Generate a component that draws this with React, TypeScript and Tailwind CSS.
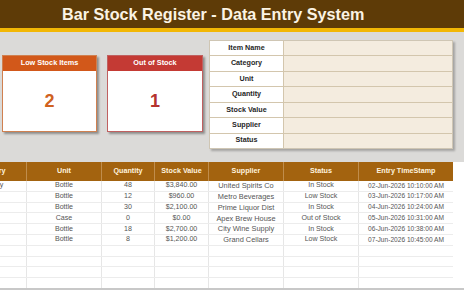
import React from 'react';

const formLabels = ['Item Name', 'Category', 'Unit', 'Quantity', 'Stock Value', 'Supplier', 'Status'];

const rows = [
    ['Whiskey', 'Bottle', '48', '$3,840.00', 'United Spirits Co', 'In Stock', '02-Jun-2026 10:10:00 AM'],
    ['Beer', 'Bottle', '12', '$960.00', 'Metro Beverages', 'Low Stock', '03-Jun-2026 10:17:00 AM'],
    ['Rum', 'Bottle', '30', '$2,100.00', 'Prime Liquor Dist', 'In Stock', '04-Jun-2026 10:24:00 AM'],
    ['Beer', 'Case', '0', '$0.00', 'Apex Brew House', 'Out of Stock', '05-Jun-2026 10:31:00 AM'],
    ['Wine', 'Bottle', '18', '$2,700.00', 'City Wine Supply', 'In Stock', '06-Jun-2026 10:38:00 AM'],
    ['Wine', 'Bottle', '8', '$1,200.00', 'Grand Cellars', 'Low Stock', '07-Jun-2026 10:45:00 AM'],
    ['', '', '', '', '', '', ''],
    ['', '', '', '', '', '', ''],
    ['', '', '', '', '', '', ''],
    ['', '', '', '', '', '', ''],
];

const headers = ['Category', 'Unit', 'Quantity', 'Stock Value', 'Supplier', 'Status', 'Entry TimeStamp'];
const widths = ['w-[73px]', 'w-[75px]', 'w-[53px]', 'w-[54px]', 'w-[75px]', 'w-[75px]', 'w-[94px]'];

function StatCard({ title, value, head, text, border }: { title: string; value: string; head: string; text: string; border: string }) {
    return (
        <div className={`flex flex-col bg-white border ${border} shadow-[2px_2px_2px_rgba(0,0,0,0.35)]`}>
            <div className={`h-[15px] ${head} flex items-center justify-center text-white font-bold text-[7.3px]`}>
                {title}
            </div>
            <div className={`flex-1 flex items-center justify-center font-bold text-[18px] ${text}`}>
                {value}
            </div>
        </div>
    );
}

export default function App() {
    return (
        <div className="w-[464px] h-[290px] overflow-hidden bg-white flex flex-col" style={{ fontFamily: '"Liberation Sans", Arial, sans-serif' }}>
            {/* Title band */}
            <div className="h-[28px] shrink-0 bg-[#5e3b07] flex items-center pl-[62px]">
                <span className="text-[#fbf3e4] font-bold text-[16.2px] leading-none">Bar Stock Register - Data Entry System</span>
            </div>
            <div className="h-[4px] shrink-0 bg-[#f2b705]" />

            {/* Cards + form */}
            <div className="h-[130px] shrink-0 bg-[#dbdad8] flex">
                <div className="flex gap-[10px] pl-[2px] pt-[23px]">
                    <div className="w-[95px] h-[77px] grid">
                        <StatCard title="Low Stock Items" value="2" head="bg-[#d2581a]" text="text-[#d0621f]" border="border-[#d08050]" />
                    </div>
                    <div className="w-[96px] h-[77px] grid">
                        <StatCard title="Out of Stock" value="1" head="bg-[#c43a34]" text="text-[#b5332f]" border="border-[#c06060]" />
                    </div>
                </div>
                <div className="ml-[6px] mt-[8px] w-[244px] h-[109px] border border-[#cfc6b4] shadow-[2px_2px_2px_rgba(0,0,0,0.25)] flex flex-col">
                    {formLabels.map((l, i) => (
                        <div key={l} className={`flex-1 flex ${i > 0 ? 'border-t border-[#d3c6ad]' : ''}`}>
                            <div className="w-[74px] bg-white border-r border-[#d3c6ad] flex items-center justify-center font-bold text-[7.2px] text-[#262626]">
                                {l}
                            </div>
                            <div className="flex-1 bg-[#f4ecdf]" />
                        </div>
                    ))}
                </div>
            </div>

            {/* Table */}
            <div className="flex-1 overflow-hidden relative">
                <div className="ml-[-46px] w-[499px]">
                    <div className="flex h-[19px] bg-[#a3630f]">
                        {headers.map((h, i) => (
                            <div key={h} className={`${widths[i]} shrink-0 flex items-center justify-center whitespace-nowrap text-[#fff3df] font-bold text-[7.2px] ${i < headers.length - 1 ? 'border-r border-[#c08d4c]' : ''}`}>
                                {h}
                            </div>
                        ))}
                    </div>
                    {rows.map((r, ri) => (
                        <div key={ri} className="flex h-[10.8px] border-b border-[#ececec]">
                            {r.map((c, ci) => (
                                <div key={ci} className={`${widths[ci]} shrink-0 flex items-center justify-center whitespace-nowrap text-[#555] leading-none ${ci === 6 ? 'text-[6.6px]' : ci === 4 ? 'text-[7.4px]' : 'text-[7.1px]'} ${ci < 6 ? 'border-r border-[#e6e6e6]' : ''}`}>
                                    {c}
                                </div>
                            ))}
                        </div>
                    ))}
                </div>
                <div className="absolute left-0 right-0 bottom-0 h-[2px] bg-[#c8c8c8]" />
            </div>
        </div>
    );
}
